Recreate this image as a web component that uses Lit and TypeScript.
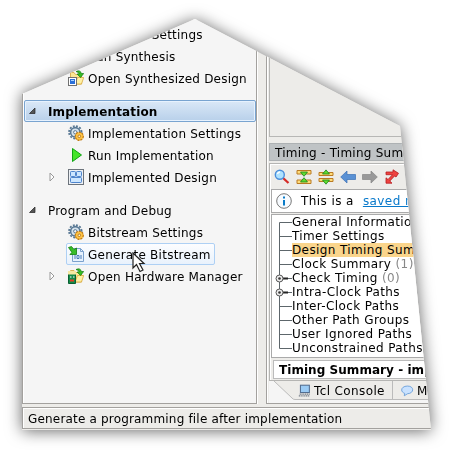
import { LitElement, html, css, svg } from "lit";
import { customElement } from "lit/decorators.js";
import { classMap } from "lit/directives/class-map.js";

const gear = svg`
  <circle cx="7.300" cy="7.300" r="6.300" fill="none" stroke="#587894" stroke-width="1.800" stroke-dasharray="1.900 1.400"/>
  <circle cx="7.300" cy="7.300" r="4.700" fill="#d5e2ec" stroke="#587894" stroke-width="1.600"/>
  <circle cx="7.300" cy="7.300" r="1.700" fill="#f5f5f5" stroke="#587894"/>
  <circle cx="11.300" cy="11.300" r="3.900" fill="#fbb62d" stroke="#c17c17" stroke-width="1.500" stroke-dasharray="2 .9"/>
  <circle cx="11.300" cy="11.300" r="3.200" fill="#ffc444"/>
  <circle cx="11.300" cy="11.300" r="1.300" fill="#fff3d2" stroke="#a86a10" stroke-width=".8"/>`;
const greenArrow = svg`<path d="M8 1.500Q12.500-.5 13.300 3.500H15.700L12.500 7.500 9 4H11.200Q11 2 8 1.500Z" fill="#35bd23" stroke="#137a12" stroke-width=".7"/>`;
const folder = svg`<path d="M2.500 2.500H6L7.500 4.500H13.500V14H2.500Z" fill="#fbe694" stroke="#d9b052"/>
  <path d="M7 14L9.500 7.500H15.700L13.500 14Z" fill="#fff0a5" stroke="#d9a93c" stroke-width=".8"/>`;
const icons: Record<string, unknown> = {
  gear,
  open: svg`${folder}<rect x=".5" y="7.500" width="8" height="8" fill="#fff" stroke="#707070"/>
    <rect x="2" y="9" width="5" height="5" fill="#2c70d8"/><path d="M3 10.500H6" stroke="#a9d2ff"/>${greenArrow}`,
  run: svg`<path d="M4.500 1.500L13.500 8 4.500 14.500Z" fill="#45e52b" stroke="#11a414"/>`,
  design: svg`<rect x=".5" y=".5" width="15" height="15" fill="#eef1f5" stroke="#6c737b"/>
    <rect x="2.500" y="2.500" width="5" height="5" rx=".8" fill="#cce6ff" stroke="#4d84cc"/>
    <rect x="8.500" y="2.500" width="5" height="5" rx=".8" fill="#cce6ff" stroke="#4d84cc"/>
    <rect x="2.500" y="8.500" width="11" height="5" rx=".8" fill="#cce6ff" stroke="#4d84cc"/>`,
  bits: svg`<path d="M5.500 2.500H12.500L15.500 5.500V15.500H4.500V8" fill="#e6f1fd" stroke="#7ba1cc"/><path d="M12.500 2.500V5.500H15.500" fill="none" stroke="#7ba1cc"/>
    <path d="M7 9V13M13 9V13M9 9.500H11V12.500H9Z" fill="none" stroke="#4a7cb9"/>
    <path d="M.5 1.500L3.500.5 6 3.500 8.500 2V8.500H1.800L4 6.500Z" fill="#38bd27" stroke="#137d12" stroke-width=".8"/>`,
  hardware: svg`${folder}<path d="M.5 4.500H7.500V15.500H.5Z" fill="#158b48" stroke="#096033"/><path d="M0 3H8V6.500H0Z" fill="#f5e8a1"/>
    <path d="M2 9H3.500M5 9H6.500" stroke="#fff"/><path d="M2 12.500H6" stroke="#e63c22" stroke-width="2"/>${greenArrow}`,
  search: svg`<path d="M9 9L14.500 14" stroke="#d52c27" stroke-width="2.300"/><circle cx="5.800" cy="5.800" r="4.500" fill="#aee2ff" stroke="#4b8edb" stroke-width="1.400"/><path d="M3.500 5Q4 3 6 3" stroke="#fff" fill="none" stroke-width="1.500"/>`,
  collapse: svg`<path d="M1 1.500H15V5H1ZM1 11H15V14.500H1Z" fill="#ffdc79" stroke="#ba7b24"/><path d="M4.500 3H11.500L8 7.300ZM8 8.700L11.500 13H4.500Z" fill="#62dc31" stroke="#19811a" stroke-width=".8"/>`,
  expand: svg`<path d="M1 3.500H15V6.500H1ZM1 9.500H15V12.500H1Z" fill="#ffdc79" stroke="#ba7b24"/><path d="M4.500 5H11.500L8 .9ZM8 15.200L11.500 11H4.500Z" fill="#62dc31" stroke="#19811a" stroke-width=".8"/>`,
  back: svg`<path d="M.7 8L7 2V5.500H15.500V10.500H7V14Z" fill="#5a91d4" stroke="#3b70b4" stroke-width=".7"/>`,
  forward: svg`<path d="M15.300 8L9 2V5.500H.5V10.500H9V14Z" fill="#999" stroke="#858585" stroke-width=".7"/>`,
  path: svg`<path d="M2 3H9V.8L14.500 4.300 12 8 10.500 7 5.800 12 8 14.200H2V8.800L4 10.500 8.500 5.700H2Z" fill="#ee4340" stroke="#b51c20" stroke-width=".8"/>`,
  info: svg`<circle cx="8" cy="8" r="7.300" fill="#f7fbff" stroke="#777" stroke-width="1"/><path d="M8 3.500V5.500M8 7V12.500" stroke="#087bc8" stroke-width="2"/>`,
  console: svg`<rect x="3" y="1.500" width="11" height="9" fill="#9acbf5" stroke="#536e90" stroke-width="1.300"/><path d="M2 12.500H15M1 14.500H14.500" stroke="#747c87" stroke-width="1.500" stroke-dasharray="1.500 .7"/>`,
  bubble: svg`<path d="M8 2.500C16.500 2.500 16.500 11.500 8 12L4 14.500 4.500 11.500C-1.500 9.500 0 2.500 8 2.500Z" fill="#c9e2ff" stroke="#6098d5"/>`,
};
const icon = (name: string) => html`<svg class="icon" viewBox="0 0 16 16">${icons[name]}</svg>`;

@customElement("app-root")
export class AppRoot extends LitElement {
  static styles = css`
    :host { display: block; width: 451px; height: 452px; overflow: hidden; background: #fff; font: 12px/14px "DejaVu Sans", sans-serif; color: #000; white-space: nowrap; }
    * { box-sizing: border-box; }
    .shadow { padding: 19px 0 0 22px; height: 452px; filter: drop-shadow(0 1px 8px rgba(0,0,0,.6)); }
    .window { width: 410px; height: 411px; display: flex; flex-direction: column; background: #edece9; clip-path: polygon(0 75px, 173px 0, 378px 107px, 409px 411px, 0 411px); }
    .work { display: flex; height: 385px; gap: 9px; }
    .icon { width: 16px; height: 16px; flex: none; display: block; }
    .flow { width: 235px; flex: none; background: #f5f5f5; border: 1px solid #a3a19e; border-top: 0; box-shadow: inset 1px 0 #fff, 1px 0 #fff; padding: 4px 0 0 1px; letter-spacing: .21px; }
    .row { display: flex; height: 22px; align-items: center; padding-left: 22px; }
    .twist { width: 21px; height: 10px; flex: none; }
    .twist path { transform: translateX(-1.5px); }
    .label { margin-left: 1px; display: flex; align-items: center; gap: 4px; height: 22px; padding: 0 4px 0 0; }
    .label span, .head span { padding-top: 2px; }
    .label.hot { height: 22px; margin-left: -1px; padding: 0 3px 0 1px; border: 1px solid #aed0f4; border-radius: 2px; background: linear-gradient(#fcfdff, #e9f2fc); letter-spacing: .25px; }
    .head { display: flex; align-items: center; height: 22px; padding-left: 4px; gap: 10px; }
    .head.bold { margin: 11px 0 0; width: 232px; border: 1px solid #79a4d0; border-radius: 2px; box-shadow: inset 0 0 0 1px #e7f2fe; background: linear-gradient(#dae8f7, #b8d0ea); font-weight: bold; letter-spacing: .15px; padding-left: 3px; }
    .head.plain { margin-top: 11px; }
    .head svg { width: 10px; height: 10px; }
    .right { width: 170px; flex: none; background: #edece9; border: solid #a3a19e; border-width: 0 0 1px 1px; box-shadow: inset 1px 0 #fff; padding-left: 2px; display: flex; flex-direction: column; }
    .canvas { height: 118px; border: solid #b7b7b5; border-width: 0 0 1px 1px; flex: none; }
    .title { height: 18px; margin-top: 6px; background: #bfc3c5; border: 1px solid #adb1b3; padding: 2px 5px; letter-spacing: .24px; flex: none; }
    .timing { height: 218px; margin-top: 2px; border: 1px solid #b5b5b3; border-right: 0; padding: 1px 0 0 1px; flex: none; box-shadow: inset 1px 1px #fff; }
    .tools { display: flex; height: 24px; padding: 4px 0 0 3px; gap: 6px; }
    .info { display: flex; align-items: center; height: 24px; border: 1px solid #aaa; background: #fff; gap: 9px; padding-left: 4px; letter-spacing: .42px; }
    .link { color: #0879cb; text-decoration: underline; }
    .tree { margin-top: 1px; height: 144px; border: 1px solid #aaa; background: #fff; padding-left: 7px; letter-spacing: .38px; }
    .node { display: flex; height: 14px; }
    .rail { width: 13px; height: 14px; overflow: visible; flex: none; }
    .selected { background: #fad58c; flex: 1; }
    .count { color: #888; }
    .caption { margin: 2px 0 0 2px; height: 19px; border: 1px solid #bbb; background: #fff; font-weight: bold; padding: 2px 5px; letter-spacing: .05px; }
    .tabs { display: flex; background: #f5f5f5; flex: 1; padding-left: 1px; }
    .slant { width: 28px; height: 19px; flex: none; }
    .tab { display: flex; flex: none; align-items: center; gap: 3px; height: 19px; width: 94px; background: #edece9; border-bottom: 1px solid #bbb; letter-spacing: .38px; }
    .tab span { padding-top: 1px; }
    .tab .icon { width: 13px; height: 13px; }
    .tab.next { border-left: 1px solid #bbb; padding-left: 8px; }
    .status { margin-top: 3px; height: 22px; background: #edece9; border: 1px solid #a3a19e; border-right: 0; box-shadow: inset 1px 1px #fff; padding: 4px 5px; letter-spacing: .18px; }
    .pointer { position: absolute; left: 132px; top: 252px; width: 14px; height: 22px; }
  `;

  private twist(on: boolean) {
    return html`<svg class="twist" viewBox="0 0 21 10">${on ? svg`<path d="M5.500 1L9.500 5 5.500 9Z" fill="#fff" stroke="#999"/>` : ""}</svg>`;
  }
  private item(name: string, text: string, branch = false, hot = false) {
    return html`<div class="row">${this.twist(branch)}<div class=${classMap({ label: true, hot })}>${icon(name)}<span>${text}</span></div></div>`;
  }
  private head(text: string, bold: boolean) {
    return html`<div class=${classMap({ head: true, bold, plain: !bold })}><svg viewBox="0 0 10 10"><path d="M7 2V7.500H1.500Z" fill="#555" stroke="#222" stroke-width=".7"/></svg><span>${text}</span></div>`;
  }
  private node(text: string, i: number, count = "") {
    const knob = i === 4 || i === 5;
    return html`<div class="node"><svg class="rail" viewBox="0 0 13 14">
      <path d=${i === 0 ? "M.5 14V7.500H13" : i === 9 ? "M.5 0V7.500H13" : "M.5 0V14M.5 7.500H13"} fill="none" stroke="#5d666b"/>
      ${knob ? svg`<path d="M4 7.500H9" stroke="#222" stroke-width="2"/><circle cx=".5" cy="7.500" r="3.500" fill="#eee" stroke="#555"/><circle cx=".5" cy="7.500" r="1.300" fill="#333"/>` : ""}
    </svg><span class=${classMap({ selected: i === 2 })}>${text}${count ? html` <span class="count">${count}</span>` : ""}</span></div>`;
  }

  render() {
    const nodes = ["General Information", "Timer Settings", "Design Timing Summary", "Clock Summary", "Check Timing", "Intra-Clock Paths", "Inter-Clock Paths", "Other Path Groups", "User Ignored Paths", "Unconstrained Paths"];
    return html`<div class="shadow"><div class="window">
      <div class="work">
        <div class="flow">
          ${this.item("gear", "Synthesis Settings")}${this.item("run", "Run Synthesis")}${this.item("open", "Open Synthesized Design")}
          ${this.head("Implementation", true)}
          ${this.item("gear", "Implementation Settings")}${this.item("run", "Run Implementation")}${this.item("design", "Implemented Design", true)}
          ${this.head("Program and Debug", false)}
          ${this.item("gear", "Bitstream Settings")}${this.item("bits", "Generate Bitstream", false, true)}${this.item("hardware", "Open Hardware Manager", true)}
        </div>
        <div class="right">
          <div class="canvas"></div>
          <div class="title">Timing - Timing Summary</div>
          <div class="timing">
            <div class="tools">${["search", "collapse", "expand", "back", "forward", "path"].map(icon)}</div>
            <div class="info">${icon("info")}<span>This is a</span><span class="link">saved report</span></div>
            <div class="tree">${nodes.map((n, i) => this.node(n, i, i === 3 ? "(1)" : i === 4 ? "(0)" : ""))}</div>
            <div class="caption">Timing Summary - impl_1</div>
          </div>
          <div class="tabs"><svg class="slant" viewBox="0 0 28 19"><path d="M4 0L22 17Q23 18.500 25 18.500H28V0Z" fill="#edece9"/><path d="M4 0L22 17Q23 18.500 25 18.500H28" fill="none" stroke="#bbb"/></svg>
            <div class="tab">${icon("console")}<span>Tcl Console</span></div><div class="tab next">${icon("bubble")}<span>M</span></div></div>
        </div>
      </div>
      <div class="status">Generate a programming file after implementation</div>
    </div></div>
    <svg class="pointer" viewBox="0 0 14 22"><path d="M1 1V16L4.500 12.500 8 19.500 11 18 7.500 11.500H12Z" fill="#fff" stroke="#222" stroke-width="1.200"/></svg>`;
  }
}
